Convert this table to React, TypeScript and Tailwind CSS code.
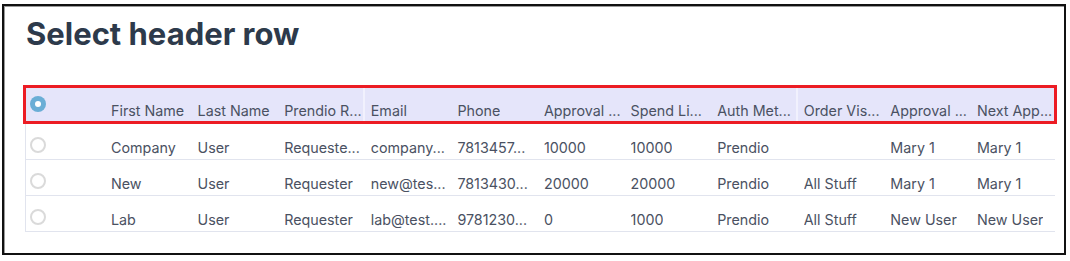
import React, { useState } from 'react';

type Row = { id: number; cells: string[] };

const headers = [
  'First Name',
  'Last Name',
  'Prendio R...',
  'Email',
  'Phone',
  'Approval ...',
  'Spend Li...',
  'Auth Met...',
  'Order Vis...',
  'Approval ...',
  'Next App...',
];

const rows: Row[] = [
  {
    id: 1,
    cells: ['Company', 'User', 'Requeste...', 'company...', '7813457...', '10000', '10000', 'Prendio', '', 'Mary 1', 'Mary 1'],
  },
  {
    id: 2,
    cells: ['New', 'User', 'Requester', 'new@tes...', '7813430...', '20000', '20000', 'Prendio', 'All Stuff', 'Mary 1', 'Mary 1'],
  },
  {
    id: 3,
    cells: ['Lab', 'User', 'Requester', 'lab@test....', '9781230...', '0', '1000', 'Prendio', 'All Stuff', 'New User', 'New User'],
  },
];

const divided = [3, 8];

function Radio({ checked, onClick }: { checked: boolean; onClick: () => void }): JSX.Element {
  return (
    <button
      type="button"
      onClick={onClick}
      className={
        checked
          ? 'flex h-[16px] w-[16px] items-center justify-center rounded-full bg-[#6aaed6]'
          : 'h-[16px] w-[16px] rounded-full border-2 border-[#dadada] bg-white'
      }
    >
      {checked && <span className="h-[6px] w-[6px] rounded-full bg-white" />}
    </button>
  );
}

function Cell({ text, index, header }: { text: string; index: number; header?: boolean }): JSX.Element {
  const split = divided.includes(index);
  return (
    <div
      className={`flex h-full w-[86.6px] shrink-0 items-end overflow-hidden ${
        split ? (header ? 'border-l-2 border-[#f1f1fd] pl-[6px]' : 'border-l-2 border-white pl-[6px]') : 'pl-2'
      } ${header ? 'pb-0' : 'pb-[1px]'}`}
    >
      <span className="truncate whitespace-nowrap leading-5">{text}</span>
    </div>
  );
}

function App(): JSX.Element {
  const [selected, setSelected] = useState(0);
  return (
    <div className="ml-[2px] mt-[4px] h-[251px] w-[1064px] border-2 border-[#111] bg-white font-['Inter',sans-serif] text-[14.3px] text-[#4a5162] shadow-[inset_1px_1px_0_#9a9a9a]">
      <h1 className="ml-[22px] mt-[10px] text-[31px] font-bold leading-9 text-[#2d3a4b]">
        Select header row
      </h1>
      <div className="ml-[19px] mt-[33px] w-[1034px]">
        <div className="flex h-[39px] border-[3px] border-[#ec1c24] bg-[#e5e5fa]">
          <div className="w-[77px] shrink-0 pl-[4px] pt-[8px]">
            <Radio checked={selected === 0} onClick={() => setSelected(0)} />
          </div>
          {headers.map((h, i) => (
            <Cell key={h + i} text={h} index={i} header />
          ))}
        </div>
        <div className="mx-[2px] border-l border-[#e1e4ee]">
          {rows.map((r) => (
            <div key={r.id} className="flex h-[36px] border-b border-[#e1e4ee]">
              <div className="w-[77px] shrink-0 pl-[4px] pt-[11px]">
                <Radio checked={selected === r.id} onClick={() => setSelected(r.id)} />
              </div>
              {r.cells.map((c, i) => (
                <Cell key={i} text={c} index={i} />
              ))}
            </div>
          ))}
        </div>
      </div>
    </div>
  );
}

export default App;
